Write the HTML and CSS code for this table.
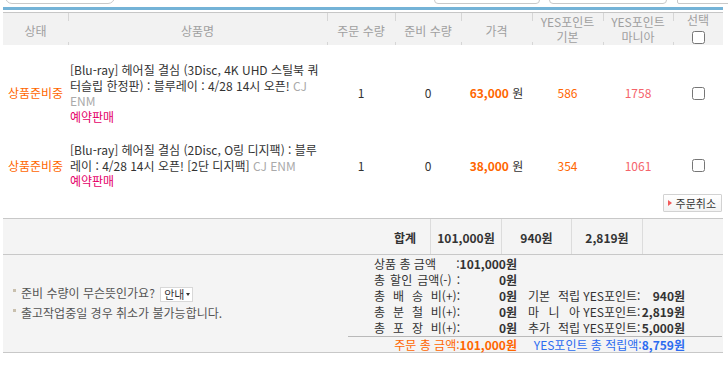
FILE: index.html
```html
<!DOCTYPE html>
<html lang="ko">
<head>
<meta charset="utf-8">
<title>주문 상세</title>
<link rel="stylesheet" href="styles.css">
</head>
<body>
<div class="topstrip">
  <span class="tb tb-search"></span>
  <span class="tb tb-sel1"></span>
  <span class="tb tb-sel2"></span>
  <span class="tb tb-btn"></span>
</div>
<div class="order">
  <div class="bluebar"></div>
  <table class="items">
    <colgroup>
      <col class="c-status"><col class="c-name"><col class="c-qty"><col class="c-ready"><col class="c-price"><col class="c-pt"><col class="c-pt2"><col class="c-sel">
    </colgroup>
    <thead>
      <tr>
        <th class="one">상태</th>
        <th class="one">상품명</th>
        <th class="one">주문 수량</th>
        <th class="one">준비 수량</th>
        <th class="one">가격</th>
        <th class="two">YES포인트<br>기본</th>
        <th class="two">YES포인트<br>마니아</th>
        <th class="sel"><span class="sel-t">선택</span><input type="checkbox" class="hchk"></th>
      </tr>
    </thead>
    <tbody>
      <tr class="first">
        <td class="status">상품준비중</td>
        <td class="name">[Blu-ray] 헤어질 결심 (3Disc, 4K UHD 스틸북 쿼터슬립 한정판) : 블루레이 : 4/28 14시 오픈! <span class="maker">CJ ENM</span><br><span class="pre">예약판매</span></td>
        <td>1</td>
        <td>0</td>
        <td class="price"><b>63,000</b> 원</td>
        <td class="pt">586</td>
        <td class="pt2">1758</td>
        <td><input type="checkbox"></td>
      </tr>
      <tr class="last">
        <td class="status">상품준비중</td>
        <td class="name">[Blu-ray] 헤어질 결심 (2Disc, O링 디지팩) : 블루레이 : 4/28 14시 오픈! [2단 디지팩] <span class="maker">CJ ENM</span><br><span class="pre">예약판매</span></td>
        <td>1</td>
        <td>0</td>
        <td class="price"><b>38,000</b> 원</td>
        <td class="pt">354</td>
        <td class="pt2">1061</td>
        <td><input type="checkbox"></td>
      </tr>
    </tbody>
  </table>
  <div class="cancel-row">
    <button class="cancel" type="button"><span class="tri"></span>주문취소</button>
  </div>
  <div class="summary">
    <div class="sumbar">
      <div class="sum-label">합계</div>
      <div>101,000원</div>
      <div>940원</div>
      <div>2,819원</div>
      <div></div>
    </div>
    <div class="detail">
      <div class="notes">
        <div class="note"><span class="dot"></span>준비 수량이 무슨뜻인가요? <span class="guide">안내<span class="caret"></span></span></div>
        <div class="note"><span class="dot"></span>출고작업중일 경우 취소가 불가능합니다.</div>
      </div>
      <div class="totals">
        <div class="trow">
          <span class="lbl">상품 총 금액</span>
          <span class="val"><span class="c">:</span><b>101,000원</b></span>
        </div>
        <div class="trow">
          <span class="lbl j">총 할인 금액(-) :</span>
          <span class="val"><b>0원</b></span>
        </div>
        <div class="trow">
          <span class="lbl j">총 배 송 비(+):</span>
          <span class="val"><b>0원</b></span>
          <span class="lbl2"><span class="sp">기본 적립</span> YES포인트:</span>
          <span class="val2"><b>940원</b></span>
        </div>
        <div class="trow">
          <span class="lbl j">총 분 철 비(+):</span>
          <span class="val"><b>0원</b></span>
          <span class="lbl2"><span class="sp">마 니 아</span> YES포인트:</span>
          <span class="val2"><b>2,819원</b></span>
        </div>
        <div class="trow">
          <span class="lbl j">총 포 장 비(+):</span>
          <span class="val"><b>0원</b></span>
          <span class="lbl2"><span class="sp">추가 적립</span> YES포인트:</span>
          <span class="val2"><b>5,000원</b></span>
        </div>
        <div class="total">
          <span class="ta">주문 총 금액:<b>101,000원</b></span>
          <span class="tb2">YES포인트 총 적립액:<b>8,759원</b></span>
        </div>
      </div>
    </div>
  </div>
</div>
</body>
</html>
```
FILE: styles.css
```css
html, body {
  margin: 0;
  padding: 0;
  background: #fff;
}
body {
  font-family: "Noto Sans CJK KR", sans-serif;
  font-size: 12px;
  color: #333;
}

/* remnants of the controls above */
.topstrip {
  display: flex;
  height: 4px;
  overflow: hidden;
}
.tb {
  display: block;
  flex: none;
  box-sizing: border-box;
  height: 14px;
  margin-top: -10px;
  border: 1px solid #c9c9c9;
  background: #fff;
}
.tb-search { margin-left: 5px; width: 110px; border-radius: 10px; }
.tb-sel1 { margin-left: 319px; width: 106px; border-radius: 4px; }
.tb-sel2 { margin-left: 9px; width: 118px; border-radius: 4px; }
.tb-btn { margin-left: 10px; width: 60px; border-radius: 2px; }

.order {
  margin: 3px 0 0 3px;
  width: 720px;
}
.bluebar {
  height: 3px;
  background: #74b3d7;
  margin-bottom: 2px;
}

/* items table */
.items {
  width: 720px;
  table-layout: fixed;
  border-collapse: collapse;
  border-top: 1px solid #c6c6c6;
}
.c-status { width: 65px; }
.c-name { width: 259px; }
.c-qty { width: 68px; }
.c-ready { width: 66px; }
.c-price { width: 71px; }
.c-pt { width: 71px; }
.c-pt2 { width: 70px; }
.c-sel { width: 50px; }

.items th {
  box-sizing: border-box;
  height: 32px;
  background: #f2f2f2;
  color: #a0a0a0;
  font-weight: normal;
  font-size: 12px;
  vertical-align: top;
  text-align: center;
  white-space: nowrap;
}
.items th + th {
  background:
    linear-gradient(#d6d6d6, #d6d6d6) left top / 1px 8px no-repeat,
    linear-gradient(#d6d6d6, #d6d6d6) left bottom / 1px 3px no-repeat,
    #f2f2f2;
}
.items th.one {
  padding: 3px 0 0;
  line-height: 29px;
}
.items th.two {
  padding: 1px 0 0;
  line-height: 15px;
}
.items th.sel {
  padding: 0;
}
.sel-t {
  display: block;
  line-height: 14px;
}
.hchk {
  display: block;
  margin: 4px auto 0;
  width: 13px;
  height: 13px;
}

.items td {
  text-align: center;
  vertical-align: middle;
  padding: 9px 2px;
  line-height: 15.5px;
  color: #333;
}
.items tr.first td { padding-top: 17px; }
.items tr.last td { padding-bottom: 4px; }
.items td.name {
  text-align: left;
  padding-left: 2px;
  padding-right: 0;
}
.items td.status { color: #f60; padding-left: 0; padding-right: 0; }
.items td.price b { color: #f60; }
.items td.pt { color: #f60; }
.items td.pt2 { color: #f5636b; }
.maker { color: #aaa; }
.pre { color: #e4006a; }

.cancel-row {
  display: flex;
  justify-content: flex-end;
  padding: 1px 1px 6px 0;
}
.cancel {
  display: flex;
  align-items: center;
  box-sizing: border-box;
  height: 18px;
  padding: 0 5px 0 4px;
  margin: 0;
  border: 1px solid #d2d2d2;
  border-radius: 1px;
  background: linear-gradient(#fff, #f3f3f3);
  font-family: "Noto Sans CJK KR", sans-serif;
  font-size: 11px;
  line-height: 16px;
  color: #333;
}
.tri {
  width: 0;
  height: 0;
  border-left: 4px solid #f25a5a;
  border-top: 3.5px solid transparent;
  border-bottom: 3.5px solid transparent;
  margin-right: 4px;
}

/* summary */
.summary {
  border-top: 1px solid #c8c8c8;
  border-bottom: 1px solid #c8c8c8;
  background: #f4f4f4;
}
.sumbar {
  display: grid;
  grid-template-columns: 427px 71px 70px 71px 1fr;
  box-sizing: border-box;
  height: 36px;
  border-bottom: 1px solid #c8c8c8;
  font-weight: bold;
}
.sumbar > div {
  border-left: 1px solid #dcdcdc;
  text-align: center;
  padding-top: 3px;
  line-height: 32px;
}
.sumbar > .sum-label {
  border-left: none;
  text-align: right;
  padding-right: 14px;
}

.detail {
  display: flex;
  height: 97px;
}
.notes {
  flex: 1;
  align-self: center;
  padding-left: 10px;
  line-height: 20px;
  color: #555;
}
.dot {
  display: inline-block;
  width: 3px;
  height: 3px;
  background: #c9c0ae;
  vertical-align: top;
  margin-top: 6px;
  margin-right: 5px;
}
.guide {
  display: inline-flex;
  align-items: center;
  box-sizing: border-box;
  height: 15px;
  padding: 0 2px 0 3px;
  margin-left: 2px;
  border: 1px solid #d8d8d8;
  background: #fff;
  font-size: 11px;
  line-height: 13px;
  color: #333;
  vertical-align: middle;
}
.caret {
  width: 0;
  height: 0;
  border-top: 3px solid #333;
  border-left: 2px solid transparent;
  border-right: 2px solid transparent;
  margin-left: 2px;
}

.totals {
  width: 374px;
  margin-right: 1px;
  padding-top: 1px;
  color: #333;
}
.trow {
  display: flex;
  height: 16px;
  line-height: 16px;
  padding-left: 26px;
  white-space: nowrap;
}
.lbl {
  flex: none;
  width: 84px;
}
.lbl.j {
  width: 86px;
  margin-right: -2px;
  text-align: justify;
  text-align-last: justify;
}
.val {
  flex: none;
  width: 59px;
  display: flex;
  justify-content: flex-end;
}
.val .c { font-weight: normal; }
.lbl2 {
  flex: none;
  width: 113px;
  margin-left: 11px;
}
.sp {
  display: inline-block;
  width: 52px;
  text-align: justify;
  text-align-last: justify;
}
.val2 {
  flex: none;
  width: 44px;
  display: flex;
  justify-content: flex-end;
}

.total {
  display: flex;
  height: 15px;
  line-height: 15px;
  border-top: 1px solid #b9b9b9;
  white-space: nowrap;
}
.ta {
  flex: none;
  width: 143px;
  margin-left: 26px;
  display: flex;
  justify-content: flex-end;
  color: #f60;
}
.tb2 {
  flex: none;
  width: 157px;
  margin-left: 11px;
  display: flex;
  justify-content: flex-end;
  color: #2c6cf0;
}
```
